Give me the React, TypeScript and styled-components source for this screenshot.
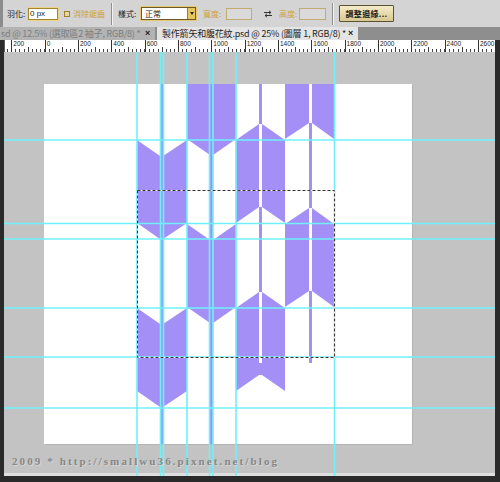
import * as React from 'react'
import styled, { createGlobalStyle } from 'styled-components'

const PURPLE = '#a38ff6'
const GUIDE = '#6ff0fb'

const GlobalStyle = createGlobalStyle`
    html, body {
        margin: 0;
        padding: 0;
        background: #2a2a2a;
    }
    body {
        font-family: "Noto Sans CJK TC", "Liberation Sans", sans-serif;
    }
`

const Window = styled.div`
    width: 500px;
    height: 482px;
    display: flex;
    flex-direction: column;
    background: #2a2a2a;
    overflow: hidden;
`

const OptionsBar = styled.div`
    height: 27px;
    flex: none;
    display: flex;
    align-items: center;
    box-sizing: border-box;
    background: #d4d4d4;
    border-left: 3px solid #8c8c8c;
    padding-left: 4px;
    font-size: 8px;
    color: #1c1c1c;
`

const Label = styled.span<{ $w: number; $ml?: number; $gold?: boolean }>`
    width: ${p => p.$w}px;
    margin-left: ${p => p.$ml || 0}px;
    flex: none;
    white-space: nowrap;
    line-height: 10px;
    color: ${p => (p.$gold ? '#cfa233' : '#1c1c1c')};
`

const TextBox = styled.div<{ $w: number; $ml: number; $disabled?: boolean }>`
    width: ${p => p.$w}px;
    height: 12px;
    margin-left: ${p => p.$ml}px;
    flex: none;
    box-sizing: border-box;
    background: ${p => (p.$disabled ? '#dadada' : '#ffffff')};
    border: 1px solid ${p => (p.$disabled ? '#c1ab73' : '#a5862f')};
    box-shadow: ${p => (p.$disabled ? 'none' : '0 0 0 1px #ead287')};
    font-family: "Liberation Sans", sans-serif;
    font-size: 8px;
    line-height: 10px;
    padding-left: 1px;
`

const CheckBox = styled.span`
    width: 6px;
    height: 6px;
    margin-left: 6px;
    flex: none;
    box-sizing: border-box;
    border: 1px solid #9d7f2c;
    background: #ead6a0;
`

const Separator = styled.span<{ $ml: number }>`
    width: 1px;
    height: 22px;
    margin-left: ${p => p.$ml}px;
    flex: none;
    background: #8f8f8f;
    border-right: 1px solid #f2f2f2;
`

const Select = styled.div`
    width: 55px;
    height: 13px;
    margin-left: 3px;
    flex: none;
    display: flex;
    box-sizing: border-box;
    background: #ffffff;
    border: 1px solid #6c5a26;
    box-shadow: 0 0 0 1px #e4c874;
`

const SelectValue = styled.span`
    flex: 1;
    padding-left: 3px;
    line-height: 11px;
`

const SelectArrow = styled.span`
    width: 7px;
    flex: none;
    display: flex;
    align-items: center;
    justify-content: center;
    background: #e6c65c;
    border-left: 1px solid #9b8232;

    &:after {
        content: '';
        border-left: 2px solid transparent;
        border-right: 2px solid transparent;
        border-top: 3px solid #222;
    }
`

const SwapIcon = styled.svg`
    margin-left: 11px;
    flex: none;
`

const EdgeButton = styled.button`
    width: 55px;
    height: 17px;
    margin-left: 5px;
    flex: none;
    padding: 0;
    box-sizing: border-box;
    border: 1px solid #5b5232;
    border-radius: 1px;
    background: linear-gradient(#f4ecca, #d8c88f);
    font-family: "Noto Sans CJK TC", sans-serif;
    font-size: 8px;
    font-weight: bold;
    color: #1a1a1a;
    letter-spacing: 0.3px;
`

const TabBar = styled.div`
    height: 13px;
    flex: none;
    display: flex;
    background: #8e8e8e;
    font-size: 9px;
    line-height: 13px;
`

const Tab = styled.div<{ $active?: boolean; $w: number }>`
    width: ${p => p.$w}px;
    flex: none;
    display: flex;
    justify-content: space-between;
    box-sizing: border-box;
    padding: 0 5px 0 ${p => (p.$active ? 5 : 1)}px;
    margin-right: 2px;
    background: ${p => (p.$active ? '#e4e4e4' : '#b3b3b3')};
    color: ${p => (p.$active ? '#1e1e1e' : '#7e7e7e')};
    white-space: nowrap;
    overflow: hidden;
    letter-spacing: -0.2px;
`

const TabClose = styled.span`
    color: #222;
    font-family: "Liberation Sans", sans-serif;
    font-weight: bold;
`

const Workspace = styled.div`
    flex: 1;
    display: flex;
    flex-direction: column;
    margin: 0 5px 6px 4px;
    min-height: 0;
`

const Ruler = styled.div`
    height: 12px;
    flex: none;
    overflow: hidden;
    background: #ffffff;
    border-left: 1px solid #5a5a5a;
    box-sizing: border-box;
`

const RulerTrack = styled.div`
    display: flex;
    margin-left: -27px;
    height: 100%;
`

const RulerSegment = styled.div`
    width: 33.333px;
    height: 100%;
    flex: none;
    box-sizing: border-box;
    border-left: 1px solid #333;
    padding-left: 1px;
    font-family: "Liberation Sans", sans-serif;
    font-size: 6.5px;
    line-height: 8px;
    color: #222;
    background-image:
        repeating-linear-gradient(to right, transparent 0 3.17px, #444 3.17px 4.17px),
        linear-gradient(to right, transparent 16.2px, #444 16.2px 17.2px, transparent 17.2px);
    background-size: 100% 3px, 100% 5px;
    background-position: left bottom, left bottom;
    background-repeat: no-repeat;
`

const CanvasArea = styled.div`
    position: relative;
    flex: 1;
    display: flex;
    flex-direction: column;
    background: #c3c3c3;
`

const Document = styled.div`
    width: 368px;
    height: 360px;
    margin: 32px 0 0 40px;
    flex: none;
    background: #ffffff;
    box-shadow: 1px 1px 0 #b4b4b4;
`

const Filler = styled.div`
    flex: 1;
`

const BottomEdge = styled.div`
    height: 3px;
    flex: none;
    background: #dedede;
`

const Overlay = styled.svg`
    position: absolute;
    left: 0;
    top: 0;
    pointer-events: none;
`

const Watermark = styled.div`
    position: absolute;
    left: 8px;
    top: 403px;
    font-family: "Liberation Serif", serif;
    font-size: 11px;
    font-weight: bold;
    letter-spacing: 2.1px;
    color: #878787;
    text-shadow: 1px 1px 0 #d6d6d6;
    white-space: nowrap;
`

type Column = {
    x0: number
    sL: number
    sR: number
    x1: number
    dir: 'down' | 'up'
    tops: number[]
    stems: [number, number][]
}

const columns: Column[] = [
    { x0: 93, sL: 116, sR: 119, x1: 143, dir: 'down', tops: [56, 224], stems: [[0, 360]] },
    { x0: 143, sL: 166, sR: 169, x1: 192, dir: 'down', tops: [-28, 140], stems: [[0, 360]] },
    { x0: 192, sL: 215, sR: 218, x1: 241, dir: 'up', tops: [40, 208], stems: [[0, 40], [123, 208], [279, 291]] },
    { x0: 241, sL: 265, sR: 268, x1: 290, dir: 'up', tops: [-44, 124], stems: [[39, 124], [207, 279]] },
]

const halves = (c: Column, t: number) => {
    if (c.dir === 'down') {
        return [
            `${c.x0},${t} ${c.sL},${t + 16} ${c.sL},${t + 99} ${c.x0},${t + 83}`,
            `${c.sR},${t + 16} ${c.x1},${t} ${c.x1},${t + 83} ${c.sR},${t + 99}`,
        ]
    }
    return [
        `${c.x0},${t + 16} ${c.sL},${t} ${c.sL},${t + 83} ${c.x0},${t + 99}`,
        `${c.sR},${t} ${c.x1},${t + 16} ${c.x1},${t + 99} ${c.sR},${t + 83}`,
    ]
}

const verticalGuides = [133, 156.5, 159.5, 183, 205.5, 209, 232, 330.5]
const horizontalGuides = [88, 171.5, 187, 256, 305, 356]
const rulerMarks = Array.from({ length: 17 }, (_, i) => (i - 2) * 200)

const ArrowPattern = () => (
    <svg width="368" height="360" viewBox="0 0 368 360">
        {columns.map((c, ci) => (
            <g key={ci} fill={PURPLE}>
                {c.tops.map(t =>
                    halves(c, t).map((pts, hi) => <polygon key={`${t}-${hi}`} points={pts} />)
                )}
                {c.stems.map(([a, b]) => (
                    <rect key={a} x={c.sL} y={a} width={c.sR - c.sL} height={b - a} />
                ))}
            </g>
        ))}
    </svg>
)

export default function App() {
    return (
        <Window>
            <GlobalStyle />
            <OptionsBar>
                <Label $w={21}>羽化:</Label>
                <TextBox $w={30} $ml={0}>0 px</TextBox>
                <CheckBox />
                <Label $w={31} $ml={3} $gold>消除鋸齒</Label>
                <Separator $ml={7} />
                <Label $w={20} $ml={5}>樣式:</Label>
                <Select>
                    <SelectValue>正常</SelectValue>
                    <SelectArrow />
                </Select>
                <Label $w={20} $ml={7} $gold>寬度:</Label>
                <TextBox $w={26} $ml={3} $disabled />
                <SwapIcon width="10" height="8" viewBox="0 0 10 8">
                    <path d="M1 2.5h7M6 0.8l2 1.7-2 1.7M9 5.5H2M4 3.8L2 5.5l2 1.7" stroke="#333" strokeWidth="1" fill="none" />
                </SwapIcon>
                <Label $w={20} $ml={6} $gold>高度:</Label>
                <TextBox $w={27} $ml={0} $disabled />
                <Separator $ml={6} />
                <EdgeButton>調整邊緣...</EdgeButton>
            </OptionsBar>
            <TabBar>
                <Tab $w={155}>
                    <span>sd @ 12.5% (選取區2 袖子, RGB/8) *</span>
                    <TabClose>×</TabClose>
                </Tab>
                <Tab $w={201} $active>
                    <span>製作箭矢和腹花紋.psd @ 25% (圖層 1, RGB/8) *</span>
                    <TabClose>×</TabClose>
                </Tab>
            </TabBar>
            <Workspace>
                <Ruler>
                    <RulerTrack>
                        {rulerMarks.map(m => (
                            <RulerSegment key={m}>{Math.abs(m)}</RulerSegment>
                        ))}
                    </RulerTrack>
                </Ruler>
                <CanvasArea>
                    <Document>
                        <ArrowPattern />
                    </Document>
                    <Filler />
                    <BottomEdge />
                    <Overlay width="491" height="424">
                        {verticalGuides.map(x => (
                            <line key={x} x1={x} y1={0} x2={x} y2={424} stroke={GUIDE} strokeWidth="1.6" />
                        ))}
                        {horizontalGuides.map(y => (
                            <line key={y} x1={0} y1={y} x2={491} y2={y} stroke={GUIDE} strokeWidth="1.6" />
                        ))}
                        <rect x="133.5" y="138.5" width="197" height="167" fill="none" stroke="#ffffff" strokeWidth="1" />
                        <rect x="133.5" y="138.5" width="197" height="167" fill="none" stroke="#333" strokeWidth="1" strokeDasharray="3 2" />
                    </Overlay>
                    <Watermark>2009 * http://smallwu36.pixnet.net/blog</Watermark>
                </CanvasArea>
            </Workspace>
        </Window>
    )
}
